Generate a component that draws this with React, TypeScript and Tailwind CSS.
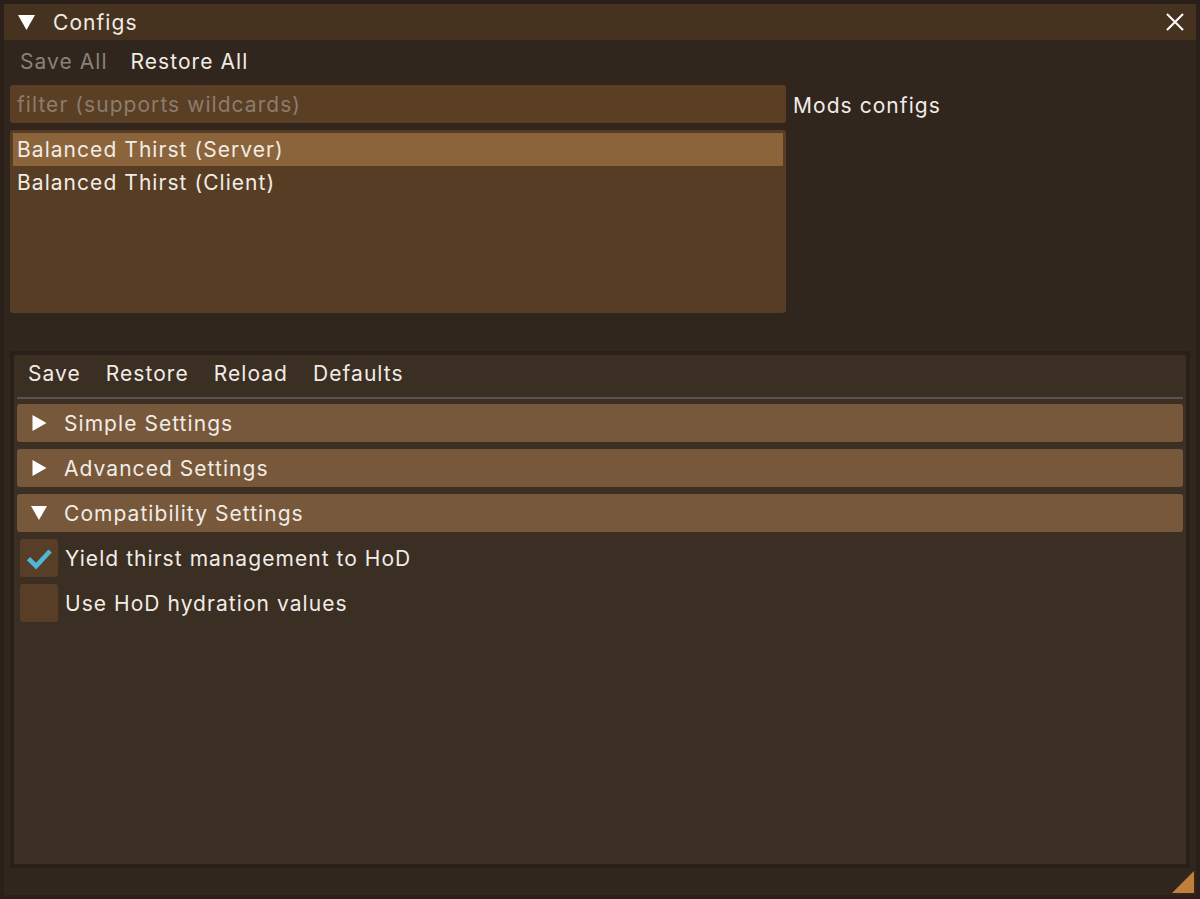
import { useState } from 'react'

const font = { fontFamily: 'Inter, "Noto Sans", sans-serif' }

function TriDown({ className }: { className?: string }) {
  return (
    <svg viewBox="0 0 16 14" className={className}>
      <polygon points="0,0 16,0 8,14" fill="white" />
    </svg>
  )
}

function TriRight({ className }: { className?: string }) {
  return (
    <svg viewBox="0 0 14 16" className={className}>
      <polygon points="0,0 14,8 0,16" fill="white" />
    </svg>
  )
}

function Header({ label, open }: { label: string; open?: boolean }) {
  return (
    <div className="h-[38px] rounded-[3px] bg-[#77583a] flex items-center pl-[14px] gap-[17px] text-[#f1ece6]">
      {open ? <TriDown className="w-[16px] h-[14px]" /> : <TriRight className="w-[15px] h-[16px] ml-[1px]" />}
      <span>{label}</span>
    </div>
  )
}

function Check({ label, checked }: { label: string; checked?: boolean }) {
  return (
    <div className="h-[38px] flex items-center gap-[7px] pl-[6px]">
      <div className="w-[38px] h-[38px] rounded-[3px] bg-[#583e26] flex items-center justify-center">
        {checked && (
          <svg viewBox="0 0 24 24" className="w-[28px] h-[28px]">
            <path d="M3 12.5 L9.5 19 L21.5 6" fill="none" stroke="#4fb6d6" strokeWidth="4" />
          </svg>
        )}
      </div>
      <span className="text-[#f1ece6]">{label}</span>
    </div>
  )
}

export default function App() {
  const [selected] = useState(0)
  const mods = ['Balanced Thirst (Server)', 'Balanced Thirst (Client)']

  return (
    <div className="w-[1200px] h-[899px] bg-[#2a2019] p-[4px] text-[21px] leading-none tracking-[0.05em]" style={font}>
      <div className="h-full flex flex-col bg-[#30261d]">
        {/* title bar */}
        <div className="h-[36px] bg-[#46331f] flex items-center pl-[14px] pr-[12px] text-[#f1ece6]">
          <TriDown className="w-[17px] h-[15px]" />
          <span className="ml-[18px]">Configs</span>
          <svg viewBox="0 0 18 18" className="ml-auto w-[18px] h-[18px]">
            <path d="M1 1 L17 17 M17 1 L1 17" stroke="white" strokeWidth="2" />
          </svg>
        </div>

        {/* menu */}
        <div className="h-[45px] flex items-center pb-[2px] pl-[16px] gap-[23px]">
          <span className="text-[#8b8178]">Save All</span>
          <span className="text-[#f1ece6]">Restore All</span>
        </div>

        <div className="px-[6px] flex flex-col gap-[7px]">
          <div className="flex items-center gap-[7px]">
            <div className="w-[776px] h-[38px] rounded-[3px] bg-[#5a3f25] flex items-center pl-[7px] text-[#8c7c6c]">
              filter (supports wildcards)
            </div>
            <span className="text-[#f1ece6] pt-[3px]">Mods configs</span>
          </div>
          <div className="w-[776px] h-[183px] rounded-[3px] bg-[#573d24] p-[3px] flex flex-col">
            {mods.map((m, i) => (
              <div
                key={m}
                className={`h-[33px] flex items-center pl-[4px] text-[#f1ece6] ${i === selected ? 'bg-[#8b643b]' : ''}`}
              >
                {m}
              </div>
            ))}
          </div>
        </div>

        {/* child panel */}
        <div className="mt-[38px] mx-[6px] flex-1 border-[4px] border-[#2a2019] bg-[#3b2e23] flex flex-col">
          <div className="h-[42px] flex items-center pb-[6px] pl-[14px] gap-[25px] text-[#f1ece6]">
            <span>Save</span>
            <span>Restore</span>
            <span>Reload</span>
            <span>Defaults</span>
          </div>
          <div className="mx-[3px] h-[2px] bg-[#5c5453]" />
          <div className="mx-[3px] mt-[5px] flex flex-col gap-[7px]">
            <Header label="Simple Settings" />
            <Header label="Advanced Settings" />
            <Header label="Compatibility Settings" open />
          </div>
          <div className="mt-[7px] flex flex-col gap-[7px]">
            <Check label="Yield thirst management to HoD" checked />
            <Check label="Use HoD hydration values" />
          </div>
        </div>

        {/* bottom strip with resize grip */}
        <div className="h-[27px] flex items-end justify-end pr-[2px] pb-[2px]">
          <svg viewBox="0 0 22 22" className="w-[22px] h-[22px]">
            <polygon points="22,0 22,22 0,22" fill="#c07f3a" />
          </svg>
        </div>
      </div>
    </div>
  )
}
